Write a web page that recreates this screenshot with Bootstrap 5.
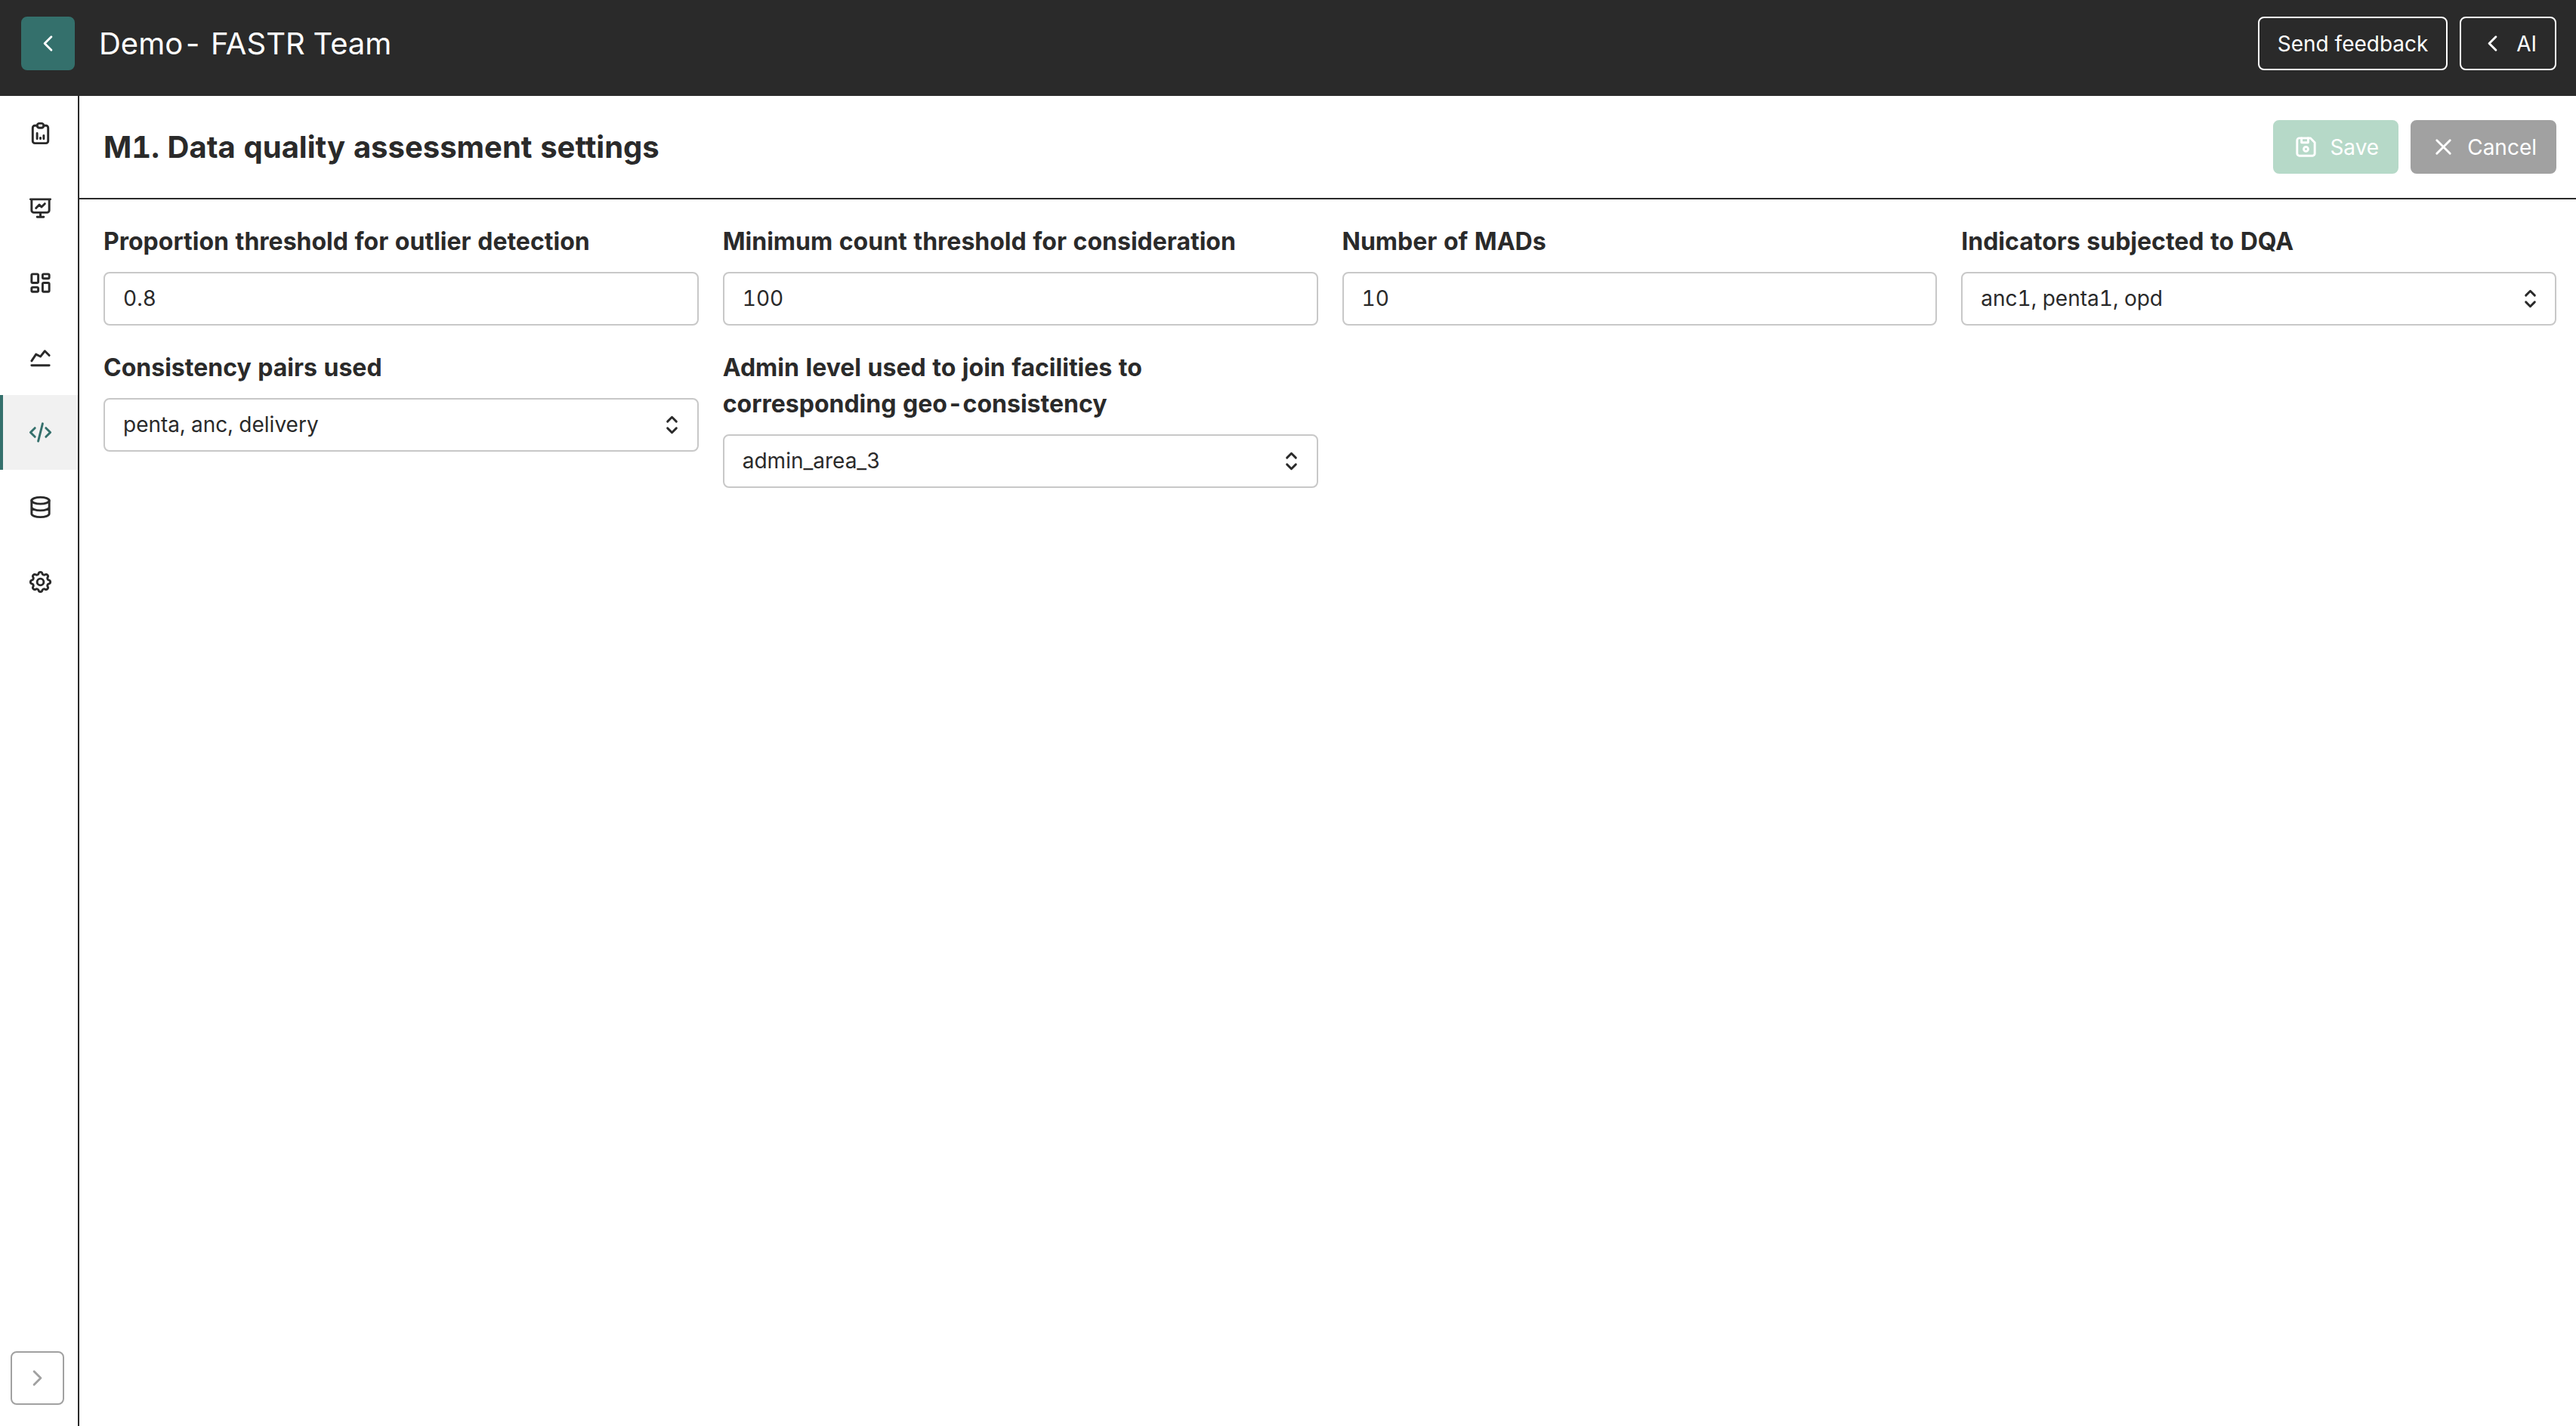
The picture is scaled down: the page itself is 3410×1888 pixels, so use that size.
<!DOCTYPE html>
<html lang="en">
<head>
<meta charset="utf-8">
<title>Demo- FASTR Team</title>
<link href="https://cdn.jsdelivr.net/npm/bootstrap@5.3.0/dist/css/bootstrap.min.css" rel="stylesheet">
<style>
:root{--ink:#2a2a2a;--teal:#34706c}
body{font-family:Inter,"Liberation Sans",sans-serif;font-size:28px;line-height:1.5;color:var(--ink);font-variant-numeric:tabular-nums;background:#fff}
.ico{width:35px;height:35px;fill:none;stroke:currentColor;stroke-width:2;stroke-linecap:round;stroke-linejoin:round;flex:none;display:block}
.topbar{height:127px;background:var(--ink);padding:22px 26px 0 28px}
.topbar .app-title{font-size:40px;line-height:71px;margin-left:32px}
.ui-btn{--bs-btn-font-size:28px;--bs-btn-line-height:1;--bs-btn-border-width:2px;--bs-btn-border-radius:8px;--bs-btn-padding-x:24px;--bs-btn-padding-y:0;--bs-btn-color:#fff;height:71px;gap:14px;--bs-btn-disabled-opacity:1;--bs-btn-disabled-color:#fff}
.ui-btn.square{width:71px;--bs-btn-padding-x:0}
.btn-teal{--bs-btn-bg:var(--teal);--bs-btn-border-color:var(--teal)}
.btn-line{--bs-btn-border-color:#fff}
.btn-feedback{--bs-btn-padding-x:23.7px}
.btn-save{--bs-btn-disabled-bg:#b6d9c8;--bs-btn-disabled-border-color:#b6d9c8}
.btn-cancel{--bs-btn-bg:#a1a1a1;--bs-btn-border-color:#a1a1a1}
.btn-expand{--bs-btn-color:#a1a1a1;--bs-btn-border-color:#a1a1a1;margin:0 0 28px 14px}
.side{width:105px;border-right:2px solid var(--ink)}
.side .nav-link{height:99px;padding:0;border-left:4px solid transparent;color:var(--ink)}
.side .nav-link.active{background:#f1f1f1;border-color:var(--teal);color:var(--teal)}
.page-head{height:137px;padding:0 26px 0 32px;border-bottom:2px solid var(--ink)}
.page-head h1{font-size:40px;font-weight:700;line-height:1}
.settings{padding:32px 26px 32px 32px}
.settings .row{--bs-gutter-x:32px;--bs-gutter-y:32px}
.settings .form-label{display:block;font-size:32px;font-weight:700;line-height:48px;margin-bottom:16px}
.field{height:71px;border:2px solid #c8c8c8;border-radius:8px;font-size:28px;padding:0 24px 2px;color:var(--ink);font-variant-numeric:inherit;line-height:1}
.field.picker{padding:0 15.5px 0 24px}
.field.picker span{padding-bottom:1px}
</style>
<script src="https://cdn.jsdelivr.net/npm/bootstrap@5.3.0/dist/js/bootstrap.bundle.min.js"></script>
</head>
<body class="vh-100 d-flex flex-column overflow-hidden">
<header class="topbar d-flex align-items-start text-white">
  <button class="btn ui-btn square btn-teal d-flex align-items-center justify-content-center" aria-label="Back"><svg class="ico" viewBox="0 0 24 24"><path d="M15 6l-6 6l6 6"/></svg></button>
  <div class="app-title">Demo- FASTR Team</div>
  <div class="d-flex gap-3 ms-auto">
    <button class="btn ui-btn btn-line btn-feedback d-flex align-items-center">Send feedback</button>
    <button class="btn ui-btn btn-line d-flex align-items-center"><svg class="ico" viewBox="0 0 24 24"><path d="M15 6l-6 6l6 6"/></svg>AI</button>
  </div>
</header>
<div class="d-flex flex-grow-1">
  <nav class="side d-flex flex-column justify-content-between flex-shrink-0">
    <div class="nav flex-column">
      <a class="nav-link d-flex align-items-center justify-content-center" href="#"><svg class="ico" viewBox="0 0 24 24"><path d="M9 5H7a2 2 0 0 0-2 2v12a2 2 0 0 0 2 2h10a2 2 0 0 0 2-2V7a2 2 0 0 0-2-2h-2"/><rect x="9" y="3" width="6" height="4" rx="2"/><path d="M9 17v-5M12 17v-1M15 17v-3"/></svg></a>
      <a class="nav-link d-flex align-items-center justify-content-center" href="#"><svg class="ico" viewBox="0 0 24 24"><path d="M3 4h18M4 4v10a2 2 0 0 0 2 2h12a2 2 0 0 0 2-2V4M12 16v4M9 20h6M8 12l3-3l2 2l3-3"/></svg></a>
      <a class="nav-link d-flex align-items-center justify-content-center" href="#"><svg class="ico" viewBox="0 0 24 24"><rect x="4" y="4" width="6" height="8" rx="1"/><rect x="4" y="16" width="6" height="4" rx="1"/><rect x="14" y="12" width="6" height="8" rx="1"/><rect x="14" y="4" width="6" height="4" rx="1"/></svg></a>
      <a class="nav-link d-flex align-items-center justify-content-center" href="#"><svg class="ico" viewBox="0 0 24 24"><path d="M4 19h16M4 15l4-6l4 2l4-5l4 4"/></svg></a>
      <a class="nav-link active d-flex align-items-center justify-content-center" href="#"><svg class="ico" viewBox="0 0 24 24"><path d="M7 8l-4 4l4 4M17 8l4 4l-4 4M14 4l-4 16"/></svg></a>
      <a class="nav-link d-flex align-items-center justify-content-center" href="#"><svg class="ico" viewBox="0 0 24 24"><ellipse cx="12" cy="6" rx="8" ry="3"/><path d="M4 6v6a8 3 0 0 0 16 0V6M4 12v6a8 3 0 0 0 16 0v-6"/></svg></a>
      <a class="nav-link d-flex align-items-center justify-content-center" href="#"><svg class="ico" viewBox="0 0 24 24"><path d="M10.325 4.317c.426-1.756 2.924-1.756 3.35 0a1.724 1.724 0 0 0 2.573 1.066c1.543-.94 3.31.826 2.37 2.37a1.724 1.724 0 0 0 1.065 2.572c1.756.426 1.756 2.924 0 3.35a1.724 1.724 0 0 0-1.066 2.573c.94 1.543-.826 3.31-2.37 2.37a1.724 1.724 0 0 0-2.572 1.065c-.426 1.756-2.924 1.756-3.35 0a1.724 1.724 0 0 0-2.573-1.066c-1.543.94-3.31-.826-2.37-2.37a1.724 1.724 0 0 0-1.065-2.572c-1.756-.426-1.756-2.924 0-3.35a1.724 1.724 0 0 0 1.066-2.573c-.94-1.543.826-3.31 2.37-2.37c1 .608 2.296.07 2.572-1.065z"/><circle cx="12" cy="12" r="3"/></svg></a>
    </div>
    <button class="btn ui-btn square btn-expand d-flex align-items-center justify-content-center" aria-label="Expand"><svg class="ico" viewBox="0 0 24 24"><path d="M9 6l6 6l-6 6"/></svg></button>
  </nav>
  <main class="flex-grow-1">
    <div class="page-head d-flex align-items-center">
      <h1 class="mb-0">M1. Data quality assessment settings</h1>
      <div class="d-flex gap-3 ms-auto">
        <button class="btn ui-btn btn-save d-flex align-items-center" disabled><svg class="ico" viewBox="0 0 24 24"><path d="M6 4h10l4 4v10a2 2 0 0 1-2 2H6a2 2 0 0 1-2-2V6a2 2 0 0 1 2-2"/><circle cx="12" cy="14" r="2"/><path d="M14 4v4H8V4"/></svg>Save</button>
        <button class="btn ui-btn btn-cancel d-flex align-items-center"><svg class="ico" viewBox="0 0 24 24"><path d="M18 6L6 18M6 6l12 12"/></svg>Cancel</button>
      </div>
    </div>
    <form class="settings">
      <div class="row row-cols-4">
        <div class="col"><label class="form-label" for="prop">Proportion threshold for outlier detection</label><input id="prop" class="field form-control" value="0.8"></div>
        <div class="col"><label class="form-label" for="mincount">Minimum count threshold for consideration</label><input id="mincount" class="field form-control" value="100"></div>
        <div class="col"><label class="form-label" for="mads">Number of MADs</label><input id="mads" class="field form-control" value="10"></div>
        <div class="col"><label class="form-label">Indicators subjected to DQA</label><div class="field picker d-flex align-items-center justify-content-between"><span>anc1, penta1, opd</span><svg class="ico" viewBox="0 0 24 24"><path d="M8 9l4-4l4 4M16 15l-4 4l-4-4"/></svg></div></div>
        <div class="col"><label class="form-label">Consistency pairs used</label><div class="field picker d-flex align-items-center justify-content-between"><span>penta, anc, delivery</span><svg class="ico" viewBox="0 0 24 24"><path d="M8 9l4-4l4 4M16 15l-4 4l-4-4"/></svg></div></div>
        <div class="col"><label class="form-label">Admin level used to join facilities to corresponding geo-consistency</label><div class="field picker d-flex align-items-center justify-content-between"><span>admin_area_3</span><svg class="ico" viewBox="0 0 24 24"><path d="M8 9l4-4l4 4M16 15l-4 4l-4-4"/></svg></div></div>
      </div>
    </form>
  </main>
</div>
</body>
</html>
